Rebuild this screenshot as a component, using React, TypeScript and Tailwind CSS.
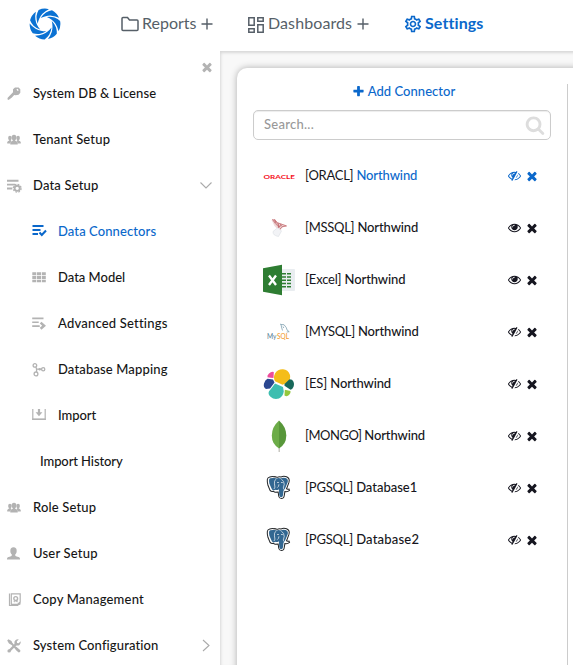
import type { ReactNode } from "react";
import { MdOutlineSettings } from "react-icons/md";

const TIMES =
  "M1490 1322q0 40-28 68l-136 136q-28 28-68 28t-68-28l-294-294-294 294q-28 28-68 28t-68-28l-136-136q-28-28-28-68t28-68l294-294-294-294q-28-28-28-68t28-68l136-136q28-28 68-28t68 28l294 294 294-294q28-28 68-28t68 28l136 136q28 28 28 68t-28 68l-294 294 294 294q28 28 28 68z";
const PLUS =
  "M1600 736v192q0 40-28 68t-68 28h-416v416q0 40-28 68t-68 28h-192q-40 0-68-28t-28-68v-416h-416q-40 0-68-28t-28-68v-192q0-40 28-68t68-28h416v-416q0-40 28-68t68-28h192q40 0 68 28t28 68v416h416q40 0 68 28t28 68z";
const SEARCH =
  "M1216 832q0-185-131.5-316.5t-316.5-131.5-316.5 131.5-131.5 316.5 131.5 316.5 316.5 131.5 316.5-131.5 131.5-316.5zm512 832q0 52-38 90t-90 38q-54 0-90-38l-343-342q-179 124-399 124-143 0-273.5-55.5t-225-150-150-225-55.5-273.5 55.5-273.5 150-225 225-150 273.5-55.5 273.5 55.5 225 150 150 225 55.5 273.5q0 220-124 399l343 343q37 37 37 90z";
const EYE =
  "M1664 960q-152-236-381-353 61 104 61 225 0 185-131.5 316.5t-316.5 131.5-316.5-131.5-131.5-316.5q0-121 61-225-229 117-381 353 133 205 333.5 326.5t434.5 121.5 434.5-121.5 333.5-326.5zm-720-384q0-20-14-34t-34-14q-125 0-214.5 89.5t-89.5 214.5q0 20 14 34t34 14 34-14 14-34q0-86 61-147t147-61q20 0 34-14t14-34zm848 384q0 34-20 69-140 230-376.5 368.5t-499.5 138.5-499.5-139-376.5-368q-20-35-20-69t20-69q140-229 376.5-368t499.5-139 499.5 139 376.5 368q20 35 20 69z";
const EYE_SLASH =
  "M555 1335l78-141q-87-63-136-159t-49-203q0-121 61-225-229 117-381 353 167 258 427 375zm389-759q0-20-14-34t-34-14q-125 0-214.5 89.5t-89.5 214.5q0 20 14 34t34 14 34-14 14-34q0-86 61-147t147-61q20 0 34-14t14-34zm363-191q0 7-1 9-106 189-316 567t-315 566l-49 89q-10 16-28 16-12 0-134-70-16-10-16-28 0-12 44-87-143-65-263.5-173t-208.5-245q-20-31-20-69t20-69q153-235 380-371t496-136q89 0 180 17l54-97q10-16 28-16 5 0 18 6t31 15.5 33 18.5 31.5 18.5 19.5 11.5q16 10 16 27zm37 447q0 139-79 253.5t-209 164.5l280-502q8 45 8 84zm448 128q0 35-20 69-39 64-109 145-150 172-347.5 267t-419.5 95l74-132q212-18 392.5-137t301.5-307q-115-179-282-294l63-112q95 64 182.5 153t144.5 184q20 34 20 69z";

function Glyph({ d, className }: { d: string; className: string }) {
  return (
    <svg viewBox="0 0 1792 1792" fill="currentColor" className={className}>
      <path d={d} />
    </svg>
  );
}

function Logo() {
  return (
    <svg viewBox="-16 -16 32 32" className="h-8 w-8 shrink-0 text-[#0b72d3]" fill="currentColor">
      {[10, 61.43, 112.86, 164.29, 215.71, 267.14, 318.57].map((a) => (
        <path
          key={a}
          transform={`rotate(${a})`}
          d="M-8.700 -12.700A15.400 15.400 0 0 1 1.300 -15.300Q-2 -13 -4.300 -9.600Q-5.900 -7 -6.500 -4.500Q-7.200 -2 -7.300 1Q-9.300 -2.600 -9.700 -6.300Q-9.700 -10 -8.700 -12.700Z"
        />
      ))}
    </svg>
  );
}

function Icon14({ children }: { children: ReactNode }) {
  return (
    <svg viewBox="0 0 14 14" width="14" height="14" fill="currentColor" className="shrink-0 overflow-visible">
      {children}
    </svg>
  );
}

const KeyIcon = () => (
  <Icon14>
    <path
      fillRule="evenodd"
      d="M6 2.200 8 .5h3.600L13.300 2.300v3.500L11.600 7.800 8.500 8.200 7.200 8 4.400 10.900 3.600 11 3.500 12 2.400 12.300 1.600 13 .4 12.300 .7 10.800 6 5.300ZM9.400 2.400 10.700 4 11.700 3.300 10.600 1.800Z"
    />
  </Icon14>
);

const GroupIcon = () => (
  <Icon14>
    <ellipse cx="2.900" cy="5" rx="1.800" ry="2.200" />
    <ellipse cx="11.100" cy="5" rx="1.800" ry="2.200" />
    <path d="M.2 10.600V9.200Q.5 8 2.200 7.500V6h1.600v1.600L4.500 8 3.500 9.200v1.400ZM13.800 10.600V9.200Q13.500 8 11.800 7.500V6h-1.600v1.600L9.500 8l1 1.200v1.400Z" />
    <ellipse cx="7" cy="4.600" rx="2.400" ry="2.800" />
    <path d="M3.300 11.500V9.500Q3.800 8.300 5.800 7.800V6.600h2.400v1.200q2 .5 2.500 1.700v2Z" />
  </Icon14>
);

const DataSetupIcon = () => (
  <Icon14>
    <path d="M0 .8h11.500v2H0ZM0 4.700h8v1.900H0ZM0 8.600h5.300v1.900H0Z" />
    <circle cx="10.200" cy="9.300" r="2.600" fill="none" stroke="currentColor" strokeWidth="1.900" />
    <circle cx="10.200" cy="9.300" r="3.900" fill="none" stroke="currentColor" strokeWidth="1.300" strokeDasharray="1.700 1.363" />
  </Icon14>
);

const ConnectorsIcon = () => (
  <Icon14>
    <path d="M.5 0h11v2H.5ZM.5 4h8v2h-8ZM.5 8h5.500v2H.5Z" />
    <path d="m7.500 7.600 2.300 2.300 4.200-4.300" fill="none" stroke="currentColor" strokeWidth="2.100" />
  </Icon14>
);

const ModelIcon = () => (
  <Icon14>
    <path d="M.3 1.300h4v3h-4ZM5 1.300h4v3H5ZM9.800 1.300h4v3h-4ZM.3 5h4v3h-4ZM5 5h4v3H5ZM9.800 5h4v3h-4ZM.3 8.700h4v2.600h-4ZM5 8.700h4v2.600H5ZM9.800 8.700h4v2.600h-4Z" />
  </Icon14>
);

const AdvancedIcon = () => (
  <Icon14>
    <path d="M.2 .5h11.300v1.800H.2ZM.2 4.400h6.500v1.700H.2ZM.2 8.300h7.500V10H.2Z" />
    <path d="m8.600 5.600 3.500 3.200-3.500 3" fill="none" stroke="currentColor" strokeWidth="2.500" />
  </Icon14>
);

const MappingIcon = () => (
  <Icon14>
    <g fill="none" stroke="currentColor" strokeWidth="1.300">
      <circle cx="2.900" cy="2.400" r="1.800" />
      <circle cx="4" cy="10.900" r="1.900" />
      <circle cx="11.200" cy="6.200" r="1.600" />
      <path d="M3.900 4Q5 6 4.600 9M5 6.200H9.500" />
    </g>
    <circle cx="7.700" cy="6.200" r="1.200" />
  </Icon14>
);

const ImportIcon = () => (
  <Icon14>
    <path d="M.8 0v10.300h12.400V0" fill="none" stroke="currentColor" strokeWidth="1.200" />
    <path d="M.2 9.400h13.600v1.600H.2ZM5.900 0h2.200v3.300h2.300L7 7.200 3.600 3.300h2.300Z" />
  </Icon14>
);

const UserIcon = () => (
  <Icon14>
    <ellipse cx="6.500" cy="3.900" rx="3.200" ry="3.700" />
    <path d="M4.800 6.500h3.400v2q.4.800 2.300 1.200 2.200.4 2.500 1.700v1.100H0v-1.100q.3-1.300 2.500-1.700Q4.400 9.300 4.800 8.500Z" />
  </Icon14>
);

const CopyIcon = () => (
  <Icon14>
    <g fill="none" stroke="currentColor" strokeWidth="1.200">
      <path d="M4.300 .8h8.900v8.200l-2.500 2.300H4.300Z" />
      <path d="M2.500 .5v12h8l2.500-2.200" />
      <circle cx="8.700" cy="5.500" r="1.900" strokeWidth="1.400" />
      <path d="m7.400 7-.4 2 1.700-.9 1.600.9-.4-2" strokeWidth=".8" />
    </g>
    <path d="m10 12.600 3.500-3.500v2.400Z" />
  </Icon14>
);

const ToolsIcon = () => (
  <Icon14>
    <path d="m1.700 1.700 3 3L11 11.700" fill="none" stroke="currentColor" strokeWidth="2" />
    <path d="m.2 1.400 1.200-1.200L4.500 2l1 2.600L4.400 5.700 2 4.500ZM9.300 7.800l3.800 3.300q.8 1-.2 1.900t-1.900.1L7.800 9.500Z" />
    <path d="M2.200 12 9 5.200" fill="none" stroke="currentColor" strokeWidth="2.400" />
    <path d="M11.800.3 9.800 2.500l.300 1.500 1.500.3 2.100-2.100Q14.200 4.500 12.500 5.900 10.700 7.100 8.700 6L7.500 4.800Q6.900 2.600 8.400 1.200 10-.3 11.800.3Z" />
    <circle cx="2.100" cy="11.900" r="1.700" />
  </Icon14>
);

interface NavItem {
  label: string;
  icon?: ReactNode;
  row: string;
  text: string;
  chevron?: "down" | "right";
}

const top = "pl-[7px] gap-3 text-[#161616]";
const sub = "pl-8 gap-3 text-[#161616]";

const NAV: NavItem[] = [
  { label: "System DB & License", icon: <KeyIcon />, row: top, text: "tracking-[0.09px]" },
  { label: "Tenant Setup", icon: <GroupIcon />, row: top, text: "tracking-[0.17px]" },
  { label: "Data Setup", icon: <DataSetupIcon />, row: top, text: "tracking-[0.17px]", chevron: "down" },
  { label: "Data Connectors", icon: <ConnectorsIcon />, row: "pl-8 gap-3 text-[#0b68cb]", text: "tracking-[0.1px]" },
  { label: "Data Model", icon: <ModelIcon />, row: sub, text: "tracking-[0px]" },
  { label: "Advanced Settings", icon: <AdvancedIcon />, row: sub, text: "tracking-[0.2px]" },
  { label: "Database Mapping", icon: <MappingIcon />, row: sub, text: "tracking-[0.15px]" },
  { label: "Import", icon: <ImportIcon />, row: sub, text: "tracking-[-0.05px]" },
  { label: "Import History", row: "pl-10 text-[#161616]", text: "tracking-[-0.1px]" },
  { label: "Role Setup", icon: <GroupIcon />, row: top, text: "tracking-[0.17px]" },
  { label: "User Setup", icon: <UserIcon />, row: top, text: "tracking-[0.2px]" },
  { label: "Copy Management", icon: <CopyIcon />, row: top, text: "tracking-[0.19px]" },
  { label: "System Configuration", icon: <ToolsIcon />, row: top, text: "tracking-[0.12px]", chevron: "right" },
];

function Chevron({ dir }: { dir: "down" | "right" }) {
  return (
    <svg
      viewBox="0 0 14 14"
      className="mr-[7px] ml-auto h-3.5 w-3.5 overflow-visible text-[#aaa]"
      fill="none"
      stroke="currentColor"
      strokeWidth="1.1"
    >
      <path d={dir === "down" ? "m1.500 3.500 5.500 5.500 5.500-5.500" : "m4 1 6 5.500L4 12"} />
    </svg>
  );
}

function Oracle() {
  return (
    <svg width="34" height="34" viewBox="0 0 34 34">
      <g transform="translate(1.500 20) scale(1 .72)">
        <text textLength="31.500" lengthAdjust="spacingAndGlyphs" fill="#f5101a" fontSize="8.400" fontWeight="700" fontFamily="Lato, sans-serif">
          ORACLE
        </text>
      </g>
    </svg>
  );
}

function SqlServer() {
  return (
    <svg width="34" height="34" viewBox="0 0 34 34">
      <path d="M9.500 9q4-1 6 2.500l9.500 3-4.500 2-4.500 6.500-.5-5-3-3Z" fill="#efdada" />
      <g fill="none" stroke="#bd5a60" strokeWidth=".7">
        <path d="M10.500 8.500q3.500.5 5 3.200L24.500 15l-4.500.8-4.500 5.200 1.300-5-3.500-3.500Z" />
        <path d="m12.500 10 5.500 5.500M16 12l1 5M18 13l2 2.500M15.500 17l4-3M12.500 8l1.500 4" />
      </g>
      <path d="m16 16.500-5 4q-.5 4 5.500 5l3-5.500Z" fill="#f2f3f6" stroke="#d5d9df" strokeWidth=".5" />
    </svg>
  );
}

function Excel() {
  return (
    <svg width="34" height="34" viewBox="0 0 34 34">
      <rect x="18" y="6" width="15" height="22" rx="1" fill="#e9edf0" />
      <path d="M20 10h4v1.500h-4ZM25 10h4v1.500h-4ZM20 13.300h4v1.500h-4ZM25 13.300h4v1.500h-4ZM20 16.500h4V18h-4ZM25 16.500h4V18h-4ZM20 19.700h4v1.500h-4ZM25 19.700h4v1.500h-4ZM20 23h4v1.500h-4ZM25 23h4v1.500h-4Z" fill="#2e7d32" />
      <path d="M1 5.200 20 1.800v30.400L1 28.800Z" fill="#2e7d32" />
      <path d="m7 12.500 7 9.500M14 12.500 7 22" stroke="#fff" strokeWidth="2.300" fill="none" />
    </svg>
  );
}

function MySql() {
  return (
    <svg width="34" height="34" viewBox="0 0 34 34">
      <path d="M20.500 15.500 19.500 12 19 9.500q3.500-1 5.200 3l1 2.700 2 1.500-2.500.3M19 9.500 18 9M21 11.500l.8 1.500" fill="none" stroke="#7d9fb0" strokeWidth=".8" />
      <text x="5" y="23.500" textLength="9.500" lengthAdjust="spacingAndGlyphs" fill="#5d8499" fontSize="8" fontWeight="500" fontFamily="Lato, sans-serif">
        My
      </text>
      <text x="15" y="23.500" textLength="12" lengthAdjust="spacingAndGlyphs" fill="#f29a30" fontSize="8" fontWeight="500" fontFamily="Lato, sans-serif">
        SQL
      </text>
    </svg>
  );
}

function Elastic() {
  return (
    <svg width="34" height="34" viewBox="0 0 34 34">
      <path d="m13 6.500q3-4.500 8-4.200t7 5.700q1 5-3 8l-4.500 1.800-7.500-3.500q-2-3.500 0-7.800Z" fill="#f4bd19" />
      <path d="M7 6.500q2.500-2.500 4.800-1.500l-.3 6q-3 0-6-.8Q4.800 8.500 7 6.500Z" fill="#ee4c9b" />
      <path d="M5.500 11.800 11 12.500l1.500 3-4.500 6-4 .5Q1 20 2 16.500q1-3.700 3.500-4.700Z" fill="#2b4790" />
      <path d="m13 16.500 8 3.500.8 4.500q-.8 5-4.800 7-5 1.500-8.500-1.700Q4.500 26 8.500 22.500Z" fill="#3ebeb0" />
      <path d="m27.500 12.200 2.500.5q3 3 1.500 7-1 2.500-3 3l-6-4V17Z" fill="#17685a" />
      <path d="m22.800 22.800 5.700 1.200q.5 2-1.500 4-2 2-4.500.5Z" fill="#94c83d" />
    </svg>
  );
}

function Mongo() {
  return (
    <svg width="34" height="34" viewBox="0 0 34 34">
      <path d="M17.200 26v7" stroke="#bbb9b2" strokeWidth="1.200" />
      <path d="M17 1.500Q9.800 8 9.800 16.500T17 29.500Z" fill="#6cac48" />
      <path d="M17 1.500Q24.300 8 24.300 16.500T17 29.500Z" fill="#58973a" />
    </svg>
  );
}

function Postgres() {
  return (
    <svg width="34" height="34" viewBox="0 0 34 34">
      <g transform="translate(1.300 .8) scale(.93)">
        <path
          d="M11 5.200q2.500 0 4 .8 2-1.200 4-.4 3-1.400 6-.2 4 1.800 2.500 6.300l-2.500 6.500q2 1 2.600.4l.6 1.400q-2 1.800-5 1.300l-.8 5q-.5 2.500-3 2.500-2.300 0-2.800-2.500l-.6-4.500-3.400.2-2-1q-2 .5-3.300-1L5 14.500Q3 6.500 6.300 5.800 9 4.900 11 5.200Z"
          fill="#fff"
          stroke="#25282b"
          strokeWidth="1.100"
        />
        <path
          d="M10.500 6.800q2.500-.5 4 .5 2-1 4 0 3-1.500 5.500-.5 3.500 1.500 2 5l-2.700 6.500q-.8 1.500-1.600 2l-.5 5q-.5 2-2 2t-2-2l-.5-6.500q-2.200 1.500-4 .5-2.700 2-4-1.500L6.500 12.500Q5.500 7.500 7.500 7Z"
          fill="#326791"
        />
        <path
          d="M13.500 8q-2 1.700-1.500 5l.5 3.500-1 2M19.500 8q3 2 3 5.500l-1 4 1.500 2.300M15 17q1.800-1 1.800-3.500M14.800 11.500h2M19 11.500h2"
          fill="none"
          stroke="#edf2f5"
          strokeWidth=".8"
        />
      </g>
    </svg>
  );
}

const CONNECTORS = [
  { logo: <Oracle />, kind: "[ORACL]", kt: "tracking-[-0.25px]", name: "Northwind", nt: "tracking-[-0.12px]", visible: false, active: true },
  { logo: <SqlServer />, kind: "[MSSQL]", kt: "tracking-[-0.27px]", name: "Northwind", nt: "tracking-[-0.12px]", visible: true },
  { logo: <Excel />, kind: "[Excel]", kt: "tracking-[-0.18px]", name: "Northwind", nt: "tracking-[-0.12px]", visible: true },
  { logo: <MySql />, kind: "[MYSQL]", kt: "tracking-[-0.3px]", name: "Northwind", nt: "tracking-[-0.12px]", visible: false },
  { logo: <Elastic />, kind: "[ES]", kt: "tracking-[-0.1px]", name: "Northwind", nt: "tracking-[-0.12px]", visible: false },
  { logo: <Mongo />, kind: "[MONGO]", kt: "tracking-[-0.5px]", name: "Northwind", nt: "tracking-[-0.12px]", visible: false },
  { logo: <Postgres />, kind: "[PGSQL]", kt: "tracking-[-0.2px]", name: "Database1", nt: "tracking-[-0.02px]", visible: false },
  { logo: <Postgres />, kind: "[PGSQL]", kt: "tracking-[-0.2px]", name: "Database2", nt: "tracking-[0.2px]", visible: false },
];

export default function App() {
  return (
    <div className="flex h-[665px] w-[573px] flex-col overflow-hidden bg-white font-['Lato','Open_Sans',sans-serif] text-[13px] font-medium">
      <header className="flex h-[51px] shrink-0 items-center pb-[4px] pl-[29px] text-[16px] font-normal text-[#565f68]">
        <Logo />
        <div className="mb-px ml-[60px] flex w-[127px] items-center">
          <svg viewBox="0 0 18 16" className="mt-[2px] h-4 w-[18px]" fill="none" stroke="currentColor" strokeWidth="1.500">
            <path d="M1 13.500V2.500q0-1 1-1h4.500L8.500 4H16q1 0 1 1v8.500q0 1-1 1H2q-1 0-1-1Z" />
          </svg>
          <span className="ml-[3px]">Reports</span>
          <svg viewBox="0 0 12 12" className="mt-px ml-[5px] h-3 w-3" stroke="currentColor" strokeWidth="1.400">
            <path d="M6 .5v11M.5 6h11" />
          </svg>
        </div>
        <div className="mb-px flex w-[155px] items-center">
          <svg viewBox="0 0 16 16" className="mt-[3px] h-4 w-4" fill="none" stroke="currentColor" strokeWidth="1.500">
            <path d="M.8.8h5.400v7.400H.8ZM9.800.8h5.400v3.400H9.800ZM.8 11.800h5.400v3.400H.8ZM9.800 7.800h5.400v7.400H9.800Z" />
          </svg>
          <span className="ml-1 tracking-[0.1px]">Dashboards</span>
          <svg viewBox="0 0 12 12" className="mt-px ml-[5px] h-3 w-3" stroke="currentColor" strokeWidth="1.400">
            <path d="M6 .5v11M.5 6h11" />
          </svg>
        </div>
        <div className="mb-px flex items-center font-bold text-[#0b68cb]">
          <MdOutlineSettings className="mt-[2px] h-[20px] w-[20px]" />
          <span className="ml-[2px] tracking-[0.1px]">Settings</span>
        </div>
      </header>

      <div className="flex min-h-0 flex-1">
        <aside className="flex w-[220px] shrink-0 flex-col">
          <div className="flex h-5 shrink-0 items-end justify-end pr-[6px] text-[#b3b3b3]">
            <Glyph d={TIMES} className="mb-[-3px] h-[14px] w-[14px]" />
          </div>
          <nav className="shrink-0">
            {NAV.map((n) => (
              <div key={n.label} className={`flex h-[46px] items-center ${n.row}`}>
                {n.icon && (
                  <span className={n.label === "Data Connectors" ? "text-[#0b68cb]" : "text-[#b3b3b3]"}>{n.icon}</span>
                )}
                <span className={n.text}>{n.label}</span>
                {n.chevron && <Chevron dir={n.chevron} />}
              </div>
            ))}
          </nav>
        </aside>

        <main className="flex-1 bg-[#f8f8f8] pt-[17px] pl-[17px] shadow-[inset_1px_2px_3px_rgba(0,0,0,0.13)]">
          <section className="flex h-[620px] w-[360px] rounded-tl-[10px] bg-white shadow-[0_0_7px_rgba(0,0,0,0.3)]">
            <div className="mt-4 w-[331px] shrink-0 border-r border-[#ccc] px-4">
              <button className="flex h-4 w-full items-center justify-center pl-[3px] text-[#0b68cb]">
                <Glyph d={PLUS} className="mr-[3px] mb-[2px] h-[13px] w-[13px]" />
                <span className="tracking-[0.05px]">Add Connector</span>
              </button>
              <div className="mt-[10px] flex h-[30px] w-[298px] items-center rounded-[5px] border border-[#ccc] pr-[5px] pl-[10px] text-[#999] shadow-[inset_0_1px_1px_rgba(0,0,0,0.075)]">
                <span className="flex-1 tracking-[0.26px]">Search...</span>
                <Glyph d={SEARCH} className="h-5 w-5 text-[#ddd]" />
              </div>
              <ul className="mt-[10px]">
                {CONNECTORS.map((c, i) => (
                  <li key={i} className="flex h-[52px] items-center pl-[9px] text-[#161620]">
                    {c.logo}
                    <span className="ml-[9px] flex-1 whitespace-pre">
                      <span className={`font-normal ${c.kt}`}>{c.kind} </span>
                      <span className={`${c.nt} ${c.active ? "text-[#0b68cb]" : ""}`}>{c.name}</span>
                    </span>
                    <span className={`mr-3 mb-px flex items-center gap-1 ${c.active ? "text-[#0b68cb]" : ""}`}>
                      <Glyph d={c.visible ? EYE : EYE_SLASH} className="h-[13px] w-[13px]" />
                      <Glyph d={TIMES} className="h-[14px] w-[14px]" />
                    </span>
                  </li>
                ))}
              </ul>
            </div>
          </section>
        </main>
      </div>
    </div>
  );
}
